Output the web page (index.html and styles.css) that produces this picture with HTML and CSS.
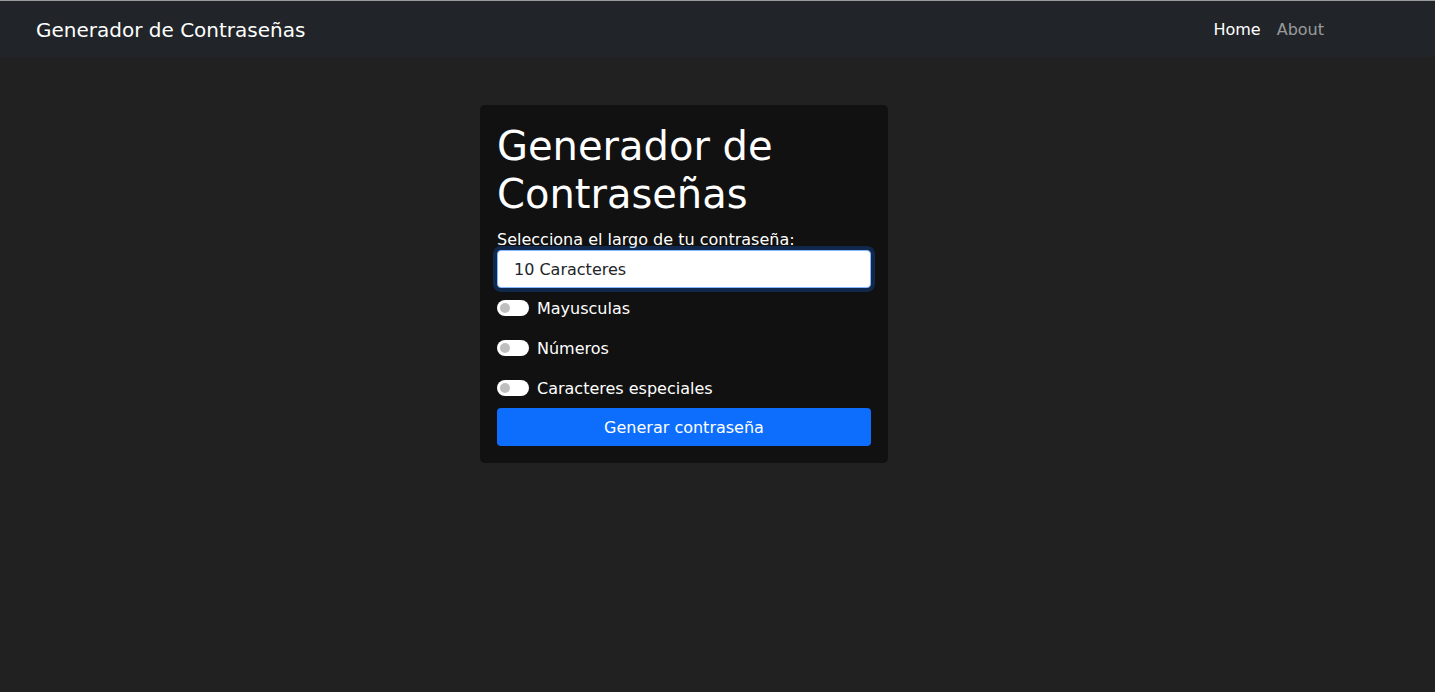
FILE: index.html
```html
<!DOCTYPE html>
<html lang="es">
<head>
<meta charset="utf-8">
<title>Generador de Contraseñas</title>
<link rel="stylesheet" href="styles.css">
</head>
<body>
<nav class="navbar">
  <a class="brand" href="#">Generador de Contraseñas</a>
  <ul class="nav">
    <li><a class="nav-link active" href="#">Home</a></li>
    <li><a class="nav-link" href="#">About</a></li>
  </ul>
</nav>
<main class="main">
  <section class="card">
    <h1 class="title">Generador de Contraseñas</h1>
    <label class="label">Selecciona el largo de tu contraseña:</label>
    <div class="select">10 Caracteres</div>
    <div class="switches">
      <div class="switch-row"><span class="switch"><span class="knob"></span></span><span class="switch-label">Mayusculas</span></div>
      <div class="switch-row"><span class="switch"><span class="knob"></span></span><span class="switch-label">Números</span></div>
      <div class="switch-row"><span class="switch"><span class="knob"></span></span><span class="switch-label">Caracteres especiales</span></div>
    </div>
    <button class="btn">Generar contraseña</button>
  </section>
</main>
</body>
</html>
```
FILE: styles.css
```css
* { box-sizing: border-box; }
html, body { margin: 0; padding: 0; }
body {
  background: #212121;
  color: #fff;
  font-family: "DejaVu Sans", sans-serif;
  font-size: 16px;
  line-height: 1.5;
  min-height: 692px;
  border-top: 1px solid #9c9c9c;
}
.navbar {
  background: #212529;
  height: 56px;
  display: flex;
  align-items: center;
  justify-content: space-between;
  padding: 2px 103px 0 36px;
}
.brand {
  color: #fff;
  text-decoration: none;
  font-size: 20px;
  line-height: 30px;
}
.nav {
  list-style: none;
  margin: 0;
  padding: 0;
  display: flex;
}
.nav-link {
  display: block;
  padding: 8px;
  color: rgba(255,255,255,0.55);
  text-decoration: none;
}
.nav-link.active { color: #fff; }
.main {
  padding: 48px 0 0 480px;
}
.card {
  width: 408px;
  background: #111111;
  border-radius: 5px;
  padding: 17px;
  display: flex;
  flex-direction: column;
}
.title {
  margin: 0 0 8px;
  font-size: 40px;
  font-weight: 400;
  line-height: 48px;
}
.label {
  display: block;
  line-height: 24px;
  padding-top: 2px;
  height: 24px;
  overflow: visible;
}
.select {
  height: 38px;
  background: #fff;
  color: #212529;
  border: 1px solid #86b7fe;
  border-radius: 4px;
  box-shadow: 0 0 0 4px rgba(13,110,253,0.25);
  padding: 7px 16px 5px;
  line-height: 24px;
}
.switches {
  display: flex;
  flex-direction: column;
  gap: 16px;
  margin: 8px 0 8px;
}
.switch-row {
  display: flex;
  align-items: center;
  gap: 8px;
  height: 24px;
}
.switch-label {
  padding-top: 2px;
}
.switch {
  width: 32px;
  height: 16px;
  background: #fff;
  border-radius: 8px;
  display: flex;
  align-items: center;
  padding-left: 3px;
}
.knob {
  width: 10px;
  height: 10px;
  border-radius: 50%;
  background: #bfbfbf;
}
.btn {
  height: 38px;
  background: #0d6efd;
  color: #fff;
  border: 0;
  border-radius: 4px;
  font-family: inherit;
  font-size: 16px;
  line-height: 24px;
  padding: 2px 0 0;
}
```
